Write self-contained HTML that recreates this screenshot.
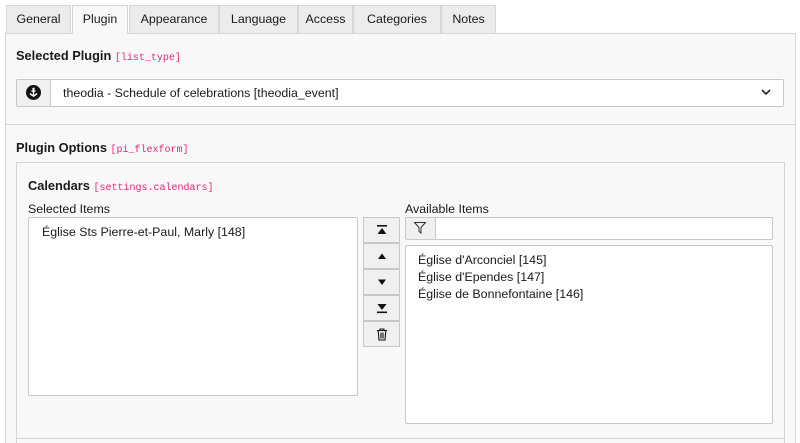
<!DOCTYPE html>
<html><head><meta charset="utf-8"><style>
*{box-sizing:border-box}
html,body{margin:0;width:800px;height:443px;overflow:hidden}
body{background:#fff;font-family:"Liberation Sans",sans-serif;font-size:12.4px;color:#1a1a1a;position:relative}
.a{position:absolute}
.tab{position:absolute;top:5px;height:28px;background:#ececec;border:1px solid #d6d6d6;border-bottom:none;text-align:center;line-height:27px;font-size:12.4px}
.mono{font-family:"Liberation Mono",monospace;color:#e8237d;font-size:10px;font-weight:normal}
.lbl{position:absolute;font-weight:bold;font-size:12.8px}
.box{position:absolute;background:#fff;border:1px solid #c8c8c8;border-radius:2px}
.btn{position:absolute;left:363px;width:37px;height:26px;background:#f0f0f0;border:1px solid #c8c8c8}
.btn svg{position:absolute;left:12px;top:6px}
</style></head><body>
<div class="a" style="left:5px;top:33px;width:791px;height:410px;background:#f8f8f8;border:1px solid #d6d6d6;border-bottom:none"></div>
<div class="tab" style="left:6px;width:65px">General</div>
<div class="tab" style="left:72px;width:56px;background:#f8f8f8;height:29px">Plugin</div>
<div class="tab" style="left:129px;width:90px">Appearance</div>
<div class="tab" style="left:219px;width:79px">Language</div>
<div class="tab" style="left:298px;width:55px">Access</div>
<div class="tab" style="left:353px;width:88px">Categories</div>
<div class="tab" style="left:441px;width:55px">Notes</div>
<div class="lbl" style="left:16px;top:48px">Selected Plugin <span class="mono">[list_type]</span></div>
<div class="box" style="left:16px;top:79px;width:768px;height:28px"></div>
<div class="a" style="left:17px;top:80px;width:34px;height:26px;background:#f0f0f0;border-right:1px solid #c8c8c8"></div>
<svg class="a" style="left:26px;top:85px" width="15" height="15"><circle cx="7.5" cy="7.5" r="7.5" fill="#111"/><path d="M7.5 4v8M4 8.5q3.5 4 7 0M5.5 6h4" stroke="#fff" stroke-width="1.4" fill="none"/><circle cx="7.5" cy="3.8" r="1.2" fill="#fff"/></svg>
<div class="a" style="left:63px;top:86px">theodia - Schedule of celebrations [theodia_event]</div>
<svg class="a" style="left:760px;top:87px" width="12" height="10"><path d="M2 3l4 4 4-4" stroke="#222" stroke-width="1.6" fill="none"/></svg>
<div class="a" style="left:6px;top:124px;width:789px;height:1px;background:#d6d6d6"></div>
<div class="lbl" style="left:16px;top:140px">Plugin Options <span class="mono">[pi_flexform]</span></div>
<div class="a" style="left:16px;top:162px;width:769px;height:290px;border:1px solid #d6d6d6;background:#f8f8f8"></div>
<div class="lbl" style="left:28px;top:178px">Calendars <span class="mono">[settings.calendars]</span></div>
<div class="a" style="left:28px;top:202px">Selected Items</div>
<div class="box" style="left:28px;top:217px;width:330px;height:179px"></div>
<div class="a" style="left:42px;top:225px">Église Sts Pierre-et-Paul, Marly [148]</div>
<div class="btn" style="top:217px"><svg width="12" height="12"><rect x="1" y="1" width="10" height="1.6" fill="#111"/><path d="M6 4L1.5 10h9z" fill="#111"/></svg></div>
<div class="btn" style="top:243px"><svg width="12" height="12"><path d="M6 3.5L2 9h8z" fill="#111"/></svg></div>
<div class="btn" style="top:269px"><svg width="12" height="12"><path d="M6 9L2 3.5h8z" fill="#111"/></svg></div>
<div class="btn" style="top:295px"><svg width="12" height="12"><path d="M6 8L1.5 2h9z" fill="#111"/><rect x="1" y="9.5" width="10" height="1.6" fill="#111"/></svg></div>
<div class="btn" style="top:321px"><svg width="12" height="13"><path d="M1 2.5h10M4 2.5V1h4v1.5M2.2 2.5l.8 9.5h6l.8-9.5M5 4.5v6M7 4.5v6" stroke="#111" stroke-width="1.1" fill="none"/></svg></div>
<div class="a" style="left:405px;top:202px">Available Items</div>
<div class="box" style="left:405px;top:217px;width:368px;height:23px"></div>
<div class="a" style="left:406px;top:218px;width:30px;height:21px;background:#f0f0f0;border-right:1px solid #c8c8c8"></div>
<svg class="a" style="left:413px;top:221px" width="14" height="14"><path d="M1.5 1.5h11l-4.5 5v5.5l-2-1.5V6.5z" stroke="#333" fill="none"/></svg>
<div class="box" style="left:405px;top:245px;width:368px;height:179px"></div>
<div class="a" style="left:418px;top:252px;line-height:17px">Église d'Arconciel [145]<br>Église d'Ependes [147]<br>Église de Bonnefontaine [146]</div>
<div class="a" style="left:17px;top:438px;width:767px;height:1px;background:#d6d6d6"></div>
</body></html>
